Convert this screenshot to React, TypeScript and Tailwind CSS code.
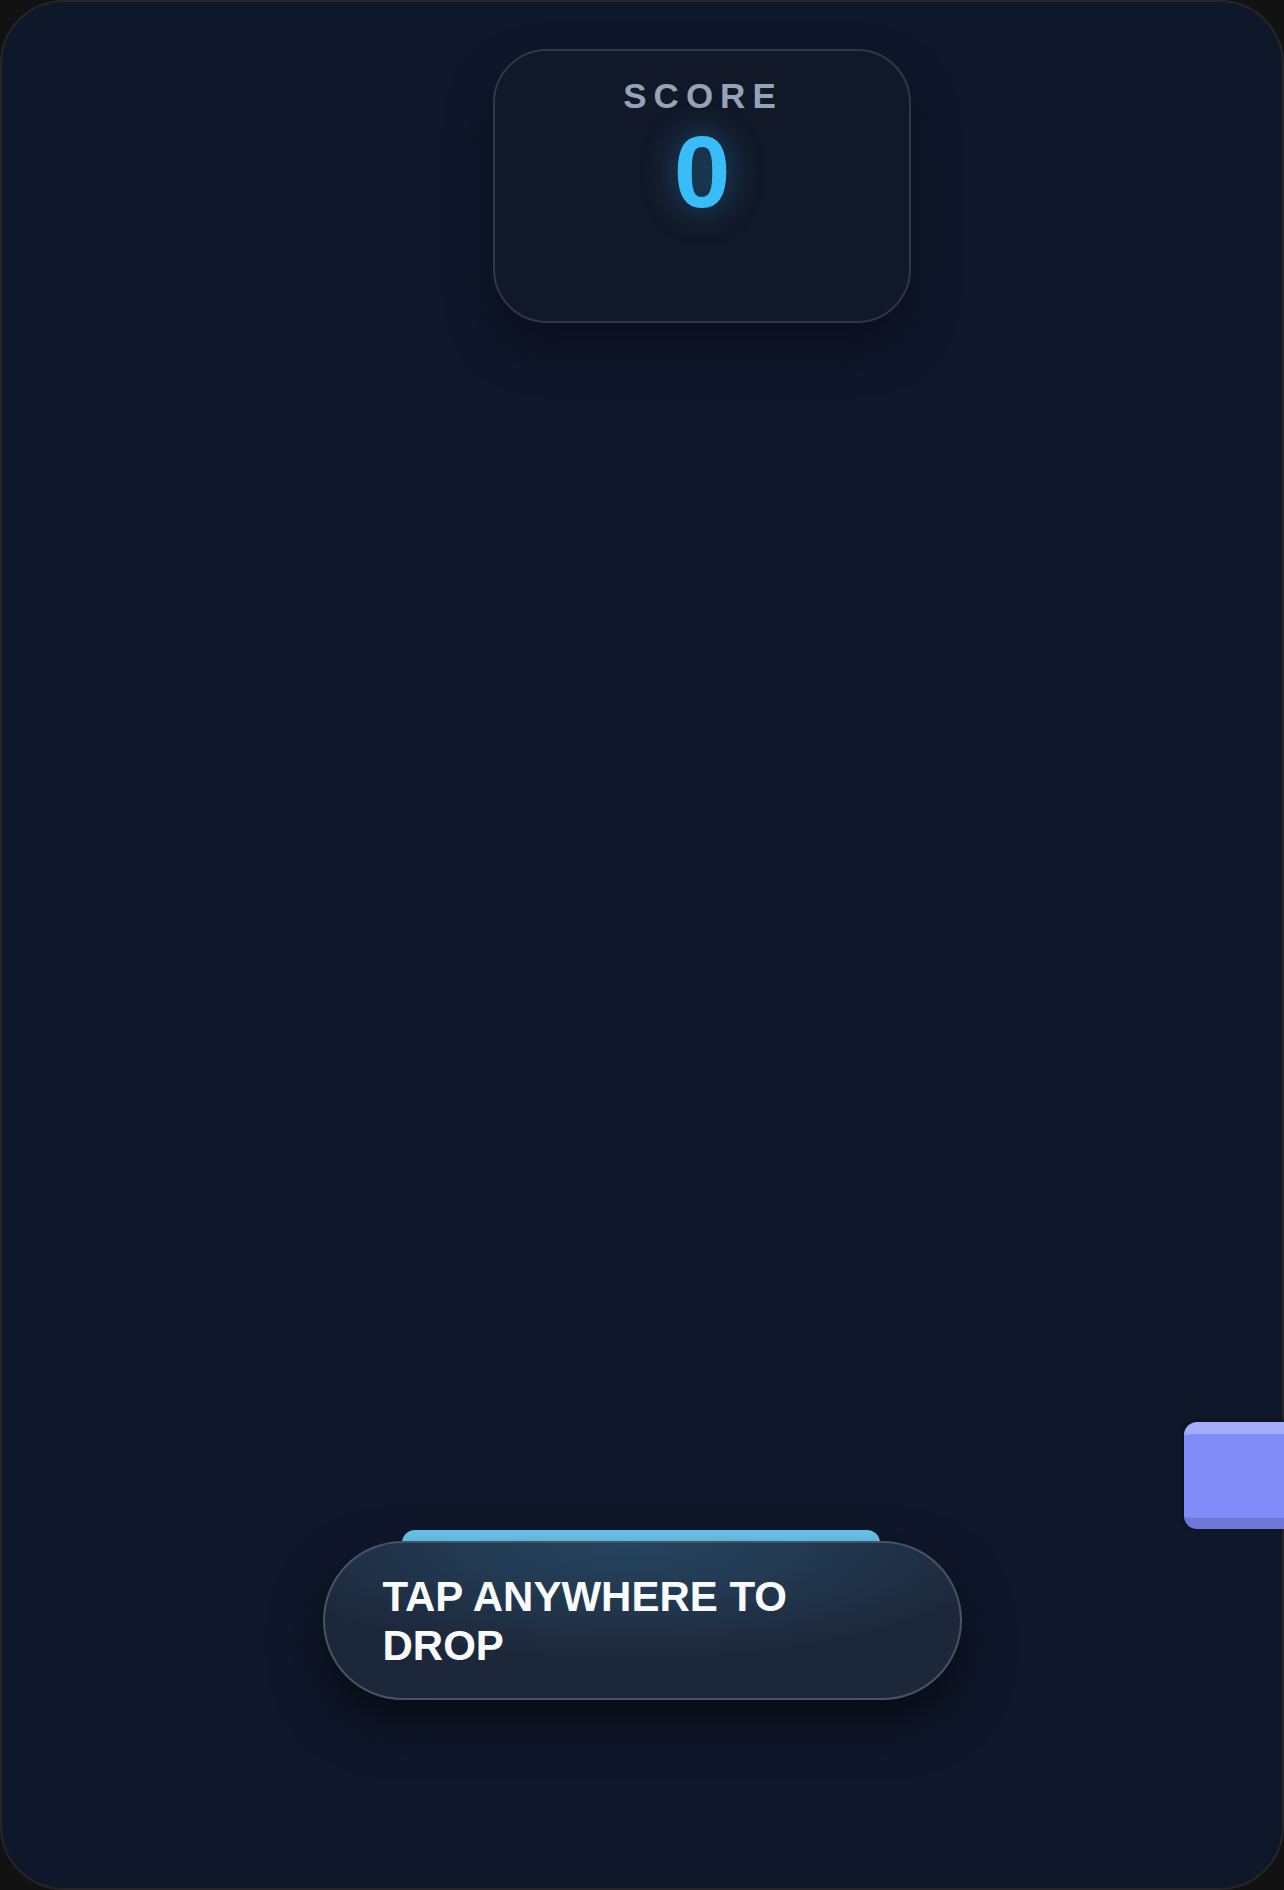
import React from "react";

const font = { fontFamily: '"Liberation Sans", Arial, sans-serif' };

const Block: React.FC<{ className?: string }> = ({ className }) => (
  <div
    className={`absolute z-10 h-[107px] rounded-[13px] border-t-[12px] border-b-[11px] ${
      className ? className : ""
    }`}
  />
);

const ScoreCard: React.FC<{ score: number }> = ({ score }) => (
  <div className="ml-[491px] mt-[47px] flex h-[274px] w-[418px] flex-col items-center rounded-[54px] border-2 border-[#2f3748] bg-[#111827] pt-[27px] shadow-[0_24px_48px_rgba(0,0,0,0.35)]">
    <div className="pl-[2px] text-[35px] font-bold leading-none tracking-[0.2em] text-[#94a3b8]">
      SCORE
    </div>
    <div className="mt-[8px] text-[102px] font-bold leading-none text-[#38bdf8] [text-shadow:0_0_36px_rgba(56,189,248,0.45)]">
      {score}
    </div>
  </div>
);

export default function App() {
  return (
    <div className="h-[1890px] w-[1284px] overflow-hidden bg-[#121212]" style={font}>
      <div className="relative flex h-full flex-col rounded-[64px] border-2 border-[#262626] bg-[#0f172a]">
        <ScoreCard score={0} />

        {/* stacked blocks on the play field */}
        <Block className="left-[400px] top-[1528px] w-[478px] rounded-b-none border-t-[#6ccaf2] border-b-[#3aa3d6] bg-[#60c0ee]" />
        <Block className="left-[1182px] top-[1420px] w-[140px] border-t-[#a4abfb] border-b-[#6f78d6] bg-[#818cf8] shadow-[-2px_-2px_4px_rgba(0,0,0,0.35)]" />

        <div className="flex-1" />

        <button className="relative z-20 mb-[188px] flex h-[159px] w-[639px] items-center self-center rounded-full border-2 border-[#465365] bg-[radial-gradient(ellipse_60%_75%_at_48%_0%,#25435d_0%,#223a52_45%,#1d273a_100%)] pl-[58px] text-left shadow-[0_22px_50px_rgba(0,0,0,0.55)]">
          <span className="w-[440px] text-[42px] font-bold leading-[49px] text-[#f8fafc]">
            TAP ANYWHERE TO DROP
          </span>
        </button>
      </div>
    </div>
  );
}
